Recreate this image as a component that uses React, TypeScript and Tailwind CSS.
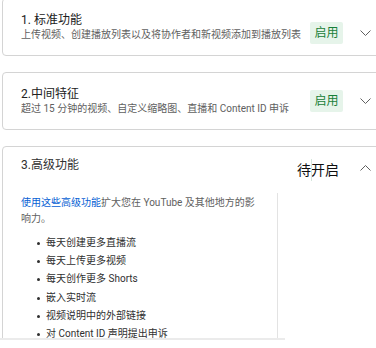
const font = "font-['Roboto','Noto_Sans_CJK_SC',sans-serif]";

function Chevron({ up = false }: { up?: boolean }) {
  return (
    <svg width="11" height="6" viewBox="0 0 11 6" fill="none" className="shrink-0">
      <path
        d={up ? 'M0.5 5.5 L5.5 0.5 L10.5 5.5' : 'M0.5 0.5 L5.5 5.5 L10.5 0.5'}
        stroke="#606060"
        strokeWidth="1"
      />
    </svg>
  );
}

function Badge() {
  return (
    <span className="flex h-[22px] w-[33px] items-center justify-center rounded-[2px] bg-[#e6f4ea] text-[12px] leading-none text-[#188038]">
      启用
    </span>
  );
}

interface FeatureCardProps {
  title: string;
  subtitle: string;
  shift?: boolean;
}

function FeatureCard({ title, subtitle, shift }: FeatureCardProps) {
  return (
    <div className="flex w-[388px] rounded-[4px] border border-[#d4d4d4] bg-white">
      <div className="w-[307px] shrink-0 pb-[13px] pl-[18px] pt-[13px]">
        <div className="text-[12px] leading-[16px] text-[#212121]">{title}</div>
        <div className="whitespace-nowrap text-[10px] leading-[14px] text-[#606060]">{subtitle}</div>
      </div>
      <div className={`flex items-center gap-[17px] ${shift ? 'mt-[11px]' : ''}`}>
        <Badge />
        <Chevron />
      </div>
    </div>
  );
}

const perks = [
  '每天创建更多直播流',
  '每天上传更多视频',
  '每天创作更多 Shorts',
  '嵌入实时流',
  '视频说明中的外部链接',
  '对 Content ID 声明提出申诉',
];

export default function App() {
  return (
    <div className={`h-[348px] w-[376px] overflow-hidden bg-white ${font}`}>
      <div className="h-[338px] overflow-hidden">
        <div className="-mt-[2px] ml-[2px] flex flex-col gap-4">
          <FeatureCard
            title="1. 标准功能"
            subtitle="上传视频、创建播放列表以及将协作者和新视频添加到播放列表"
            shift
          />
          <FeatureCard
            title="2.中间特征"
            subtitle="超过 15 分钟的视频、自定义缩略图、直播和 Content ID 申诉"
          />

          <div className="w-[388px] rounded-t-[4px] border border-[#d4d4d4] bg-white">
            <div className="flex h-[46px]">
              <div className="w-[294px] shrink-0 pl-[18px] pt-[10px] text-[12px] leading-[16px] text-[#303030]">
                3.高级功能
              </div>
              <div className="relative w-[63px] shrink-0 pt-[12px] text-[14px] leading-[22px] text-[#0f0f0f]">
                待开启
                <span className="absolute left-[14px] top-[12px] h-[22px] w-px bg-[#d5e6dc]" />
              </div>
              <div className="pt-[18px]">
                <Chevron up />
              </div>
            </div>
            <div className="flex">
              <div className="h-[160px] w-[275px] shrink-0 border-r border-[#e3e3e3] pl-[18px] pr-[14px] pt-[2px]">
                <p className="text-[10px] leading-[16px] text-[#606060]">
                  <span className="text-[#065fd4]">使用这些高级功能</span>
                  扩大您在 YouTube 及其他地方的影响力。
                </p>
                <ul className="mt-[7px] pl-[25px] text-[10px] leading-[18.2px] text-[#303030]">
                  {perks.map((p) => (
                    <li key={p} className="relative">
                      <span className="absolute -left-[9px] top-[8px] h-[3px] w-[3px] rounded-full bg-[#303030]" />
                      {p}
                    </li>
                  ))}
                </ul>
              </div>
            </div>
          </div>
        </div>
      </div>
      <div className="h-[2px] w-[285px] bg-[#ebebeb]" />
    </div>
  );
}
